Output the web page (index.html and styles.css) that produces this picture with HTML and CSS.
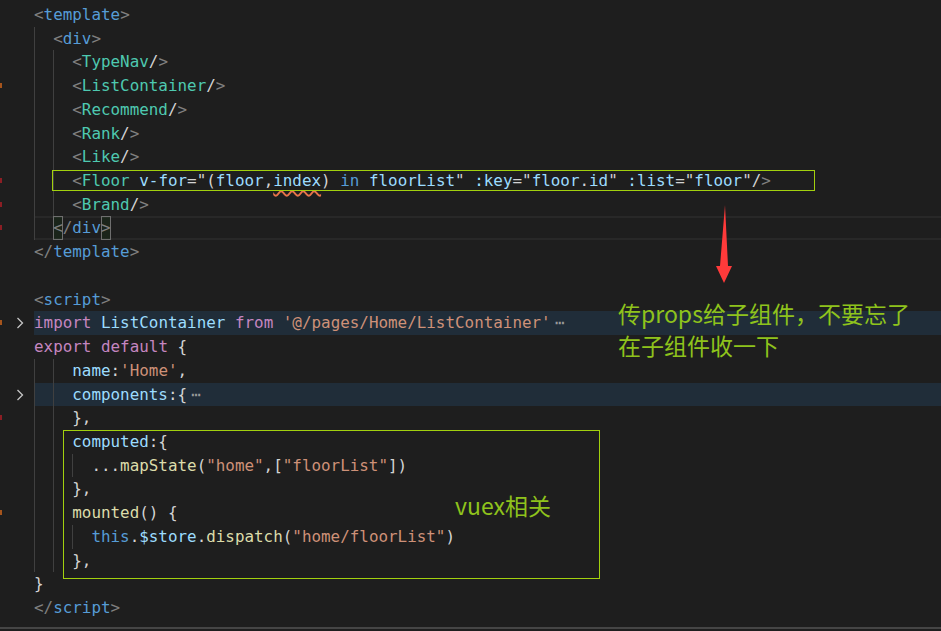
FILE: index.html
```html
<!doctype html>
<html lang="zh-CN">
  <head>
    <meta charset="UTF-8" />
    <meta name="viewport" content="width=device-width, initial-scale=1.0" />
    <title>Home.vue</title>
    <link rel="stylesheet" href="styles.css">
  </head>
  <body>
    <div class="editor">
      <div class="line"><div class="gutter"></div><div class="code"><span class="p">&lt;</span><span class="t">template</span><span class="p">&gt;</span></div></div>
      <div class="line"><div class="gutter"></div><div class="code"><span class="ind">  </span><span class="p">&lt;</span><span class="t">div</span><span class="p">&gt;</span></div></div>
      <div class="line"><div class="gutter"></div><div class="code"><span class="ind">  </span><span class="ind">  </span><span class="p">&lt;</span><span class="c">TypeNav</span><span class="o">/</span><span class="p">&gt;</span></div></div>
      <div class="line"><div class="gutter mark-o"></div><div class="code"><span class="ind">  </span><span class="ind">  </span><span class="p">&lt;</span><span class="c">ListContainer</span><span class="o">/</span><span class="p">&gt;</span></div></div>
      <div class="line"><div class="gutter"></div><div class="code"><span class="ind">  </span><span class="ind">  </span><span class="p">&lt;</span><span class="c">Recommend</span><span class="o">/</span><span class="p">&gt;</span></div></div>
      <div class="line"><div class="gutter"></div><div class="code"><span class="ind">  </span><span class="ind">  </span><span class="p">&lt;</span><span class="c">Rank</span><span class="o">/</span><span class="p">&gt;</span></div></div>
      <div class="line"><div class="gutter"></div><div class="code"><span class="ind">  </span><span class="ind">  </span><span class="p">&lt;</span><span class="c">Like</span><span class="o">/</span><span class="p">&gt;</span></div></div>
      <div class="line"><div class="gutter mark-r"></div><div class="code"><span class="ind">  </span><span class="ind">  </span><span class="p">&lt;</span><span class="c">Floor</span> <span class="a">v-for</span><span class="o">="(</span><span class="a">floor</span><span class="o">,</span><span class="a squiggle">index</span><span class="o">)</span> <span class="t">in</span> <span class="a">floorList</span><span class="o">"</span> <span class="a">:key</span><span class="o">="</span><span class="a">floor</span><span class="o">.</span><span class="a">id</span><span class="o">"</span> <span class="a">:list</span><span class="o">="</span><span class="a">floor</span><span class="o">"/</span><span class="p">&gt;</span></div></div>
      <div class="line"><div class="gutter mark-r"></div><div class="code"><span class="ind">  </span><span class="ind">  </span><span class="p">&lt;</span><span class="c">Brand</span><span class="o">/</span><span class="p">&gt;</span></div></div>
      <div class="line current"><div class="gutter mark-r"></div><div class="code"><span class="ind">  </span><span class="p bm">&lt;</span><span class="p">/</span><span class="t">div</span><span class="p bm">&gt;</span></div></div>
      <div class="line"><div class="gutter"></div><div class="code"><span class="p">&lt;/</span><span class="t">template</span><span class="p">&gt;</span></div></div>
      <div class="line"><div class="gutter"></div><div class="code"></div></div>
      <div class="line"><div class="gutter"></div><div class="code"><span class="p">&lt;</span><span class="t">script</span><span class="p">&gt;</span></div></div>
      <div class="line folded"><div class="gutter mark-o"><svg class="chevron" width="8" height="12" viewBox="0 0 8 12"><polyline points="1.5,1 6.5,6 1.5,11" /></svg></div><div class="code"><span class="k">import</span> <span class="v">ListContainer</span> <span class="k">from</span> <span class="s">'@/pages/Home/ListContainer'</span><span class="fold">⋯</span></div></div>
      <div class="line"><div class="gutter"></div><div class="code"><span class="k">export</span> <span class="k">default</span> <span class="o">{</span></div></div>
      <div class="line"><div class="gutter"></div><div class="code"><span class="ind">  </span><span class="ind">  </span><span class="v">name</span><span class="o">:</span><span class="s">'Home'</span><span class="o">,</span></div></div>
      <div class="line folded"><div class="gutter"><svg class="chevron" width="8" height="12" viewBox="0 0 8 12"><polyline points="1.5,1 6.5,6 1.5,11" /></svg></div><div class="code"><span class="ind">  </span><span class="ind">  </span><span class="v">components</span><span class="o">:{</span><span class="fold">⋯</span></div></div>
      <div class="line"><div class="gutter mark-r"></div><div class="code"><span class="ind">  </span><span class="ind">  </span><span class="o">},</span></div></div>
      <div class="line"><div class="gutter"></div><div class="code"><span class="ind">  </span><span class="ind">  </span><span class="v">computed</span><span class="o">:{</span></div></div>
      <div class="line"><div class="gutter"></div><div class="code"><span class="ind">  </span><span class="ind">  </span><span class="ind">  </span><span class="o">...</span><span class="f">mapState</span><span class="o">(</span><span class="s">"home"</span><span class="o">,[</span><span class="s">"floorList"</span><span class="o">])</span></div></div>
      <div class="line"><div class="gutter"></div><div class="code"><span class="ind">  </span><span class="ind">  </span><span class="o">},</span></div></div>
      <div class="line"><div class="gutter mark-o"></div><div class="code"><span class="ind">  </span><span class="ind">  </span><span class="f">mounted</span><span class="o">() {</span></div></div>
      <div class="line"><div class="gutter"></div><div class="code"><span class="ind">  </span><span class="ind">  </span><span class="ind">  </span><span class="t">this</span><span class="o">.</span><span class="v">$store</span><span class="o">.</span><span class="f">dispatch</span><span class="o">(</span><span class="s">"home/floorList"</span><span class="o">)</span></div></div>
      <div class="line"><div class="gutter"></div><div class="code"><span class="ind">  </span><span class="ind">  </span><span class="o">},</span></div></div>
      <div class="line"><div class="gutter"></div><div class="code"><span class="o">}</span></div></div>
      <div class="line"><div class="gutter"></div><div class="code"><span class="p">&lt;/</span><span class="t">script</span><span class="p">&gt;</span></div></div>

      <!-- annotations drawn over the editor -->
      <div class="note-box floor-box"></div>
      <div class="note-box vuex-box"></div>
      <svg class="arrow" width="24" height="86" viewBox="0 0 24 86">
        <polygon points="12,4 15,65 19,65 11,82 3,65 7,65" />
      </svg>
      <div class="note props-note">传props给子组件，不要忘了<br>在子组件收一下</div>
      <div class="note vuex-note">vuex相关</div>
    </div>
    <div class="panel-edge"></div>
  </body>
</html>
```

FILE: styles.css
```css
body {
  margin: 0;
  background: #1e1e1e;
  width: 941px;
  height: 631px;
  overflow: hidden;
}

.editor {
  position: relative;
  padding-top: 3px;
  height: 624px;
  color: #d4d4d4;
  font-size: 15.9px;
  font-family: 'DejaVu Sans Mono', 'Liberation Mono', monospace;
}

.line {
  display: flex;
  height: 23.72px;
  line-height: 23.72px;
}

.gutter {
  position: relative;
  flex: none;
  width: 34px;
}

.gutter.mark-o::before,
.gutter.mark-r::before {
  position: absolute;
  top: 9px;
  left: 0;
  width: 2px;
  height: 5px;
  content: "";
}

.gutter.mark-o::before {
  background: #a5541c;
}

.gutter.mark-r::before {
  background: #8c1e24;
}

.chevron {
  margin: 6px 0 0 16px;
  display: block;
}

.chevron polyline {
  fill: none;
  stroke: #c5c5c5;
  stroke-width: 1.3;
}

.code {
  flex: 1;
  white-space: pre;
}

.line.current .code {
  box-shadow: inset 0 2px #282828, inset 0 -2px #282828;
}

.line.folded .code {
  background: #202d39;
}

.ind {
  display: inline-block;
  vertical-align: top;
  box-shadow: inset 1px 0 #404040;
  width: 2ch;
  height: 23.72px;
}

.bm {
  display: inline-block;
  vertical-align: top;
  box-shadow: inset 0 0 0 1px #6e6e6e;
  background: rgba(0, 100, 0, 0.1);
  height: 23.72px;
}

.squiggle {
  text-decoration: underline wavy #e8744a;
  text-decoration-thickness: 1.5px;
  text-underline-offset: 4px;
}

.p { color: #808080; }
.t { color: #569cd6; }
.c { color: #4ec9b0; }
.a { color: #9cdcfe; }
.v { color: #9cdcfe; }
.s { color: #ce9178; }
.k { color: #c586c0; }
.f { color: #dcdcaa; }
.o { color: #d4d4d4; }

.fold {
  margin-left: 4px;
  color: #9a9a9a;
}

.note-box {
  position: absolute;
  border: 1px solid #a2d00e;
}

.floor-box {
  top: 170px;
  left: 52px;
  width: 761px;
  height: 19px;
}

.vuex-box {
  top: 430px;
  left: 63px;
  width: 535px;
  height: 147px;
}

.arrow {
  position: absolute;
  top: 201px;
  left: 713px;
}

.arrow polygon {
  fill: #ff3a3a;
}

.note {
  position: absolute;
  color: #8fc31c;
  font-size: 23px;
  line-height: 32px;
  font-family: 'Noto Sans CJK SC', 'Noto Sans', sans-serif;
}

.props-note {
  top: 297px;
  left: 618px;
}

.vuex-note {
  top: 489px;
  left: 455px;
}

.panel-edge {
  border-top: 2px solid #454545;
  height: 2px;
}
```
